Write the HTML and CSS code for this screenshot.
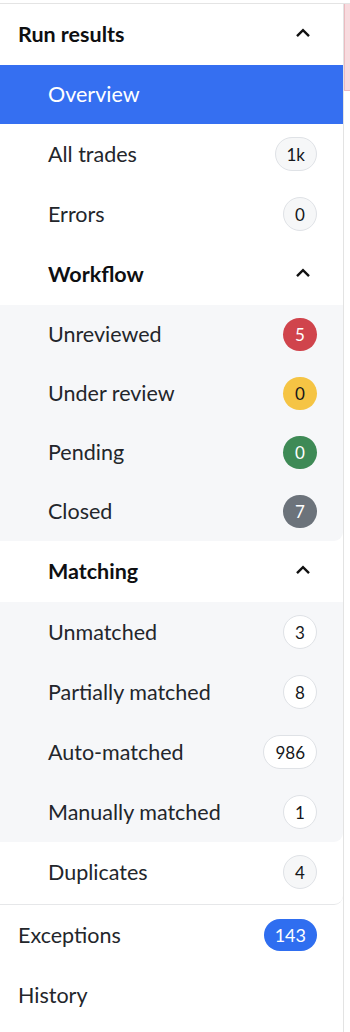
FILE: index.html
```html
<!DOCTYPE html>
<html lang="en">
<head>
<meta charset="utf-8">
<title>Run results</title>
<link rel="stylesheet" href="styles.css">
</head>
<body>
<div class="layout">
  <nav class="sidebar">
    <div class="group">
      <div class="group-header">
        <span class="group-title">Run results</span>
        <span class="chevron"><svg width="16" height="10" viewBox="0 0 16 10"><path d="M2 8.2 L8 2.2 L14 8.2" fill="none" stroke="#111" stroke-width="2.4" stroke-linejoin="miter"/></svg></span>
      </div>
      <div class="item item-active"><span class="label">Overview</span></div>
      <div class="item"><span class="label">All trades</span><span class="badge">1k</span></div>
      <div class="item"><span class="label">Errors</span><span class="badge">0</span></div>

      <div class="subheader">
        <span class="subheader-title">Workflow</span>
        <span class="chevron"><svg width="16" height="10" viewBox="0 0 16 10"><path d="M2 8.2 L8 2.2 L14 8.2" fill="none" stroke="#111" stroke-width="2.4"/></svg></span>
      </div>
      <div class="section">
        <div class="item"><span class="label">Unreviewed</span><span class="badge badge-red">5</span></div>
        <div class="item"><span class="label">Under review</span><span class="badge badge-yellow">0</span></div>
        <div class="item"><span class="label">Pending</span><span class="badge badge-green">0</span></div>
        <div class="item"><span class="label">Closed</span><span class="badge badge-gray">7</span></div>
      </div>

      <div class="subheader">
        <span class="subheader-title">Matching</span>
        <span class="chevron"><svg width="16" height="10" viewBox="0 0 16 10"><path d="M2 8.2 L8 2.2 L14 8.2" fill="none" stroke="#111" stroke-width="2.4"/></svg></span>
      </div>
      <div class="section">
        <div class="item"><span class="label">Unmatched</span><span class="badge">3</span></div>
        <div class="item"><span class="label">Partially matched</span><span class="badge">8</span></div>
        <div class="item"><span class="label">Auto-matched</span><span class="badge">986</span></div>
        <div class="item"><span class="label">Manually matched</span><span class="badge">1</span></div>
      </div>
      <div class="item"><span class="label">Duplicates</span><span class="badge">4</span></div>
    </div>

    <div class="nav-item"><span class="label">Exceptions</span><span class="badge badge-blue">143</span></div>
    <div class="nav-item"><span class="label">History</span></div>
  </nav>
  <div class="content">
    <div class="alert"></div>
  </div>
</div>
</body>
</html>
```

FILE: styles.css
```css
* { box-sizing: border-box; }

html, body {
  margin: 0;
  padding: 0;
  background: #ffffff;
}

body {
  padding-top: 3px;
  font-family: Lato, "Noto Sans", "Liberation Sans", sans-serif;
  font-size: 21.5px;
  color: #23262b;
  overflow: hidden;
}

.layout {
  display: flex;
  border-top: 1px solid #e4e4e4;
  min-height: calc(100vh - 3px);
}

.sidebar {
  flex: none;
  width: 344px;
  border-right: 1px solid #e3e3e3;
  display: flex;
  flex-direction: column;
}

.content {
  flex: 1;
  overflow: hidden;
}

.alert {
  width: 400px;
  height: 87px;
  background: #f8dade;
  border: 1px solid #ecbac0;
  border-top: none;
}

.group {
  padding-bottom: 2px;
  border-bottom: 1px solid #e6e7e9;
  border-bottom-right-radius: 9px;
}

.group-header,
.subheader {
  display: flex;
  align-items: center;
  justify-content: space-between;
  padding: 13px 26px 13px 18px;
  line-height: 35px;
  font-weight: 700;
  color: #0e0f11;
}

.subheader {
  padding-left: 48px;
}

.chevron {
  width: 28px;
  height: 35px;
  display: flex;
  align-items: center;
  justify-content: center;
  padding-bottom: 4px;
}

.chevron svg { display: block; }

.item,
.nav-item {
  display: flex;
  align-items: center;
  justify-content: space-between;
  padding: 13px 26px 13px 48px;
  line-height: 33px;
}

.nav-item {
  padding-left: 18px;
  line-height: 34px;
}

.item-active {
  background: #356ff1;
  color: #ffffff;
}

.section {
  background: #f6f7f9;
  border-bottom-right-radius: 9px;
}

.badge {
  display: inline-flex;
  align-items: center;
  justify-content: center;
  height: 34px;
  min-width: 34px;
  padding: 0 11px;
  border-radius: 17px;
  border: 1px solid #dfe2e6;
  background: #f6f7f8;
  color: #15171a;
  font-size: 17px;
  line-height: 1;
}

.section .badge {
  background: #ffffff;
}

.section .badge-red,
.section .badge-yellow,
.section .badge-green,
.section .badge-gray,
.badge-blue {
  border: none;
  height: 33px;
}

.section .badge-red { background: #d0444c; color: #ffffff; }
.section .badge-yellow { background: #f5c444; color: #15171a; }
.section .badge-green { background: #3e8a56; color: #ffffff; }
.section .badge-gray { background: #6c737b; color: #ffffff; }

.badge-blue {
  background: #2f6ef0;
  color: #ffffff;
  height: 32px;
  padding: 0 11px;
  font-size: 18px;
}
```
